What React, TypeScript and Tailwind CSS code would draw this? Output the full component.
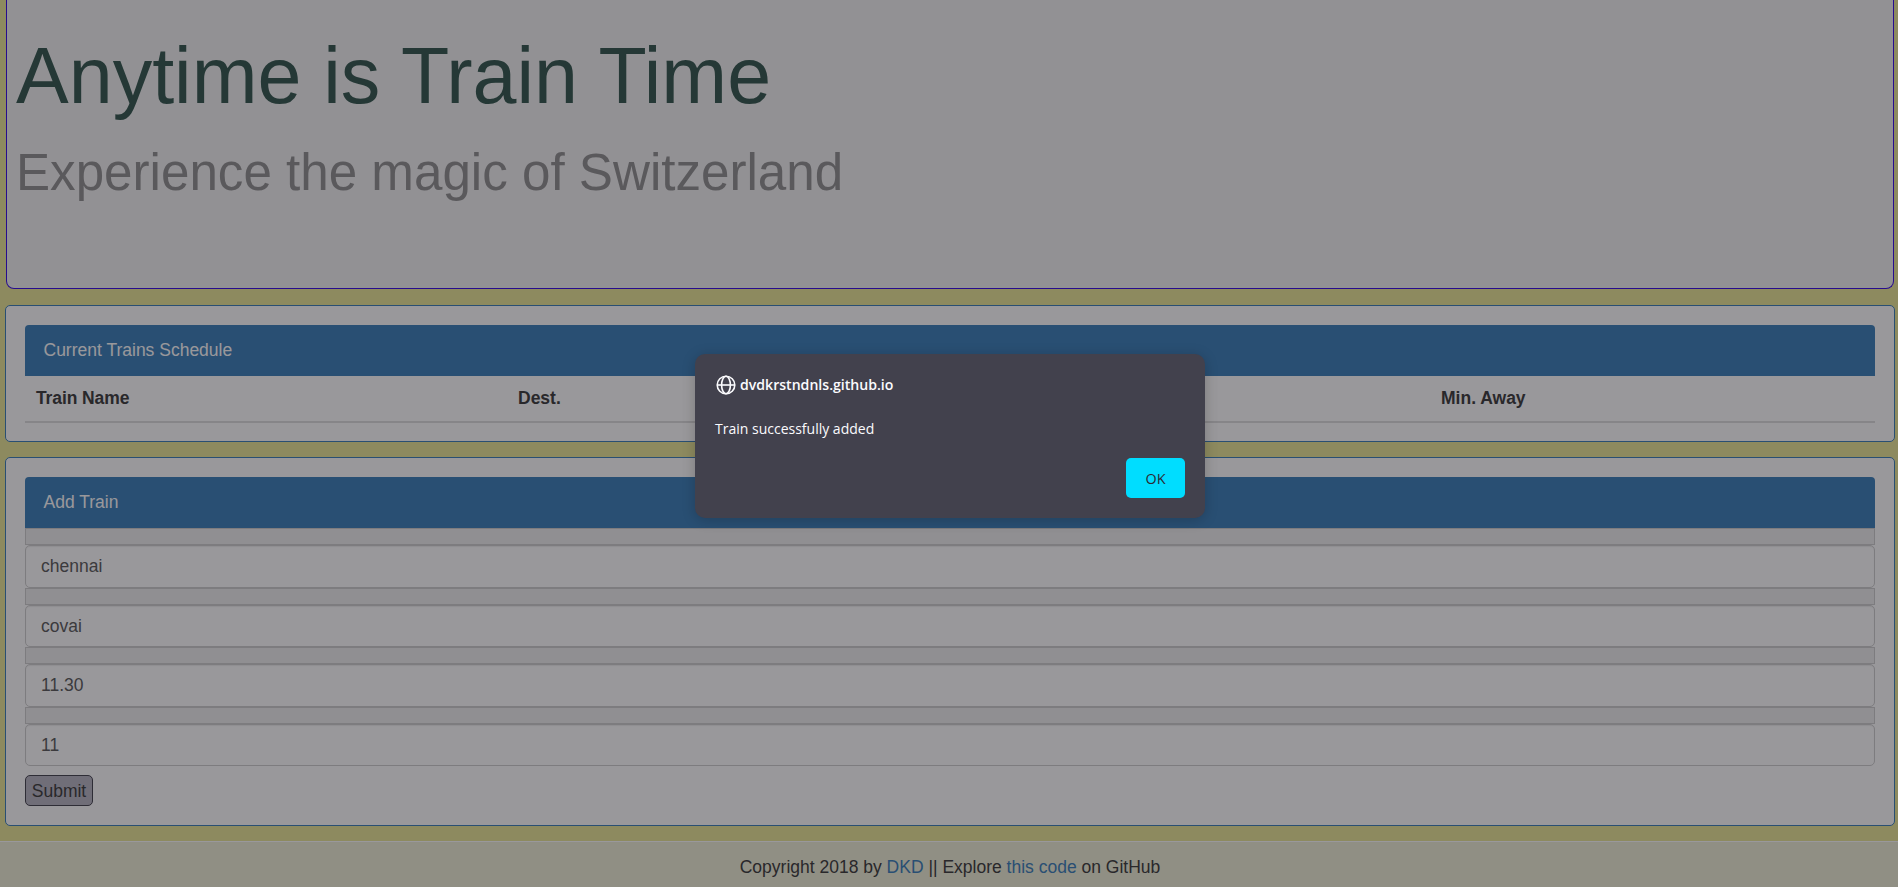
const fields = [
  { name: "train", value: "chennai", size: "h-[43px]" },
  { name: "destination", value: "covai", size: "h-[42px]" },
  { name: "time", value: "11.30", size: "h-[43px]" },
  { name: "frequency", value: "11", size: "h-[42px]" },
];

function PanelHeading({ title }: { title: string }) {
  return (
    <div className="flex h-[51px] items-center rounded-t-[4px] bg-[#337ab7] pl-[18.5px] text-white">
      {title}
    </div>
  );
}

function GlobeIcon() {
  return (
    <svg width="20" height="20" viewBox="0 0 20 20" fill="none" stroke="currentColor" strokeWidth="1.6">
      <circle cx="10" cy="10" r="8.8" />
      <ellipse cx="10" cy="10" rx="4.4" ry="8.8" />
      <path d="M1.2 10h17.6" />
    </svg>
  );
}

function AlertDialog() {
  return (
    <div className="absolute inset-0 flex items-start justify-center bg-[#1c1b22]/45 pt-[354px] pl-[2px]">
      <div
        role="alertdialog"
        className="flex h-[164px] w-[510px] flex-col rounded-[10px] bg-[#42414d] px-5 pt-5 pb-5 font-['Open_Sans',sans-serif] text-[#fbfbfe] shadow-[0_2px_14px_rgba(0,0,0,0.2)]"
      >
        <div className="flex h-[22px] items-center gap-[4px] pl-[1px]">
          <GlobeIcon />
          <span className="-mt-[2px] text-[14.1px] font-semibold whitespace-nowrap">dvdkrstndnls.github.io</span>
        </div>
        <p className="mt-[22px] h-[22px] text-[14px] leading-[22px] whitespace-nowrap">Train successfully added</p>
        <button className="mt-[18px] h-10 w-[59px] shrink-0 self-end rounded-[5px] bg-[#00ddff] text-[14.4px] text-[#2b2a33]">
          OK
        </button>
      </div>
    </div>
  );
}

export default function App() {
  return (
    <div className="relative flex h-[887px] w-full flex-col overflow-hidden bg-[#e9e593] font-['Liberation_Sans',Arial,sans-serif] text-[17.5px] leading-[25px] text-[#333333]">
      <header className="mr-[4px] ml-[6px] h-[289px] shrink-0 rounded-b-[8px] border border-t-0 border-[#3000e8] bg-[#f2f2f2] pl-[9px]">
        <h1 className="pt-[32px] text-[79px] leading-[88px] text-[#2c5147]">Anytime is Train Time</h1>
        <h2 className="mt-[24px] text-[51.15px] leading-[57px] text-[#8d8d8d]">
          Experience the magic of Switzerland
        </h2>
      </header>

      <section className="mt-4 mr-[3px] ml-[5px] h-[137px] shrink-0 rounded-[5px] border border-[#337ab7] bg-white p-[19px]">
        <PanelHeading title="Current Trains Schedule" />
        <div className="grid h-[47px] grid-cols-[482px_923px_1fr] items-center border-b-2 border-[#dddddd] font-bold">
          <span className="pl-[11px] tracking-[-0.1px]">Train Name</span>
          <span className="pl-[11px]">Dest.</span>
          <span className="pl-[11px]">Min. Away</span>
        </div>
      </section>

      <section className="mt-[15px] mr-[3px] ml-[5px] h-[369px] shrink-0 rounded-[5px] border border-[#337ab7] bg-white p-[19px]">
        <PanelHeading title="Add Train" />
        <form>
          {fields.map((field) => (
            <div key={field.name}>
              <div className="h-[17px] border border-[#cccccc] bg-[#eeeeee]" />
              <input
                name={field.name}
                defaultValue={field.value}
                className={`block w-full rounded-[5px] border border-[#cccccc] bg-white px-[15px] text-[#555555] shadow-[inset_0_1px_1px_rgba(0,0,0,0.075)] ${field.size}`}
              />
            </div>
          ))}
          <button
            type="button"
            className="mt-[9px] block h-[31px] w-[68px] rounded-[5px] border border-[#3d3c47] bg-[#b5b3c0] text-center leading-[28px]"
          >
            Submit
          </button>
        </form>
      </section>

      <footer className="mt-[15px] h-[46px] shrink-0 border-t border-[#ffffff] bg-[#efeed5] pt-[13px] pl-[2px] text-center">
        Copyright 2018 by <a className="text-[#337ab7]">DKD</a> || Explore{" "}
        <a className="text-[#337ab7]">this code</a> on GitHub
      </footer>

      <AlertDialog />
    </div>
  );
}
